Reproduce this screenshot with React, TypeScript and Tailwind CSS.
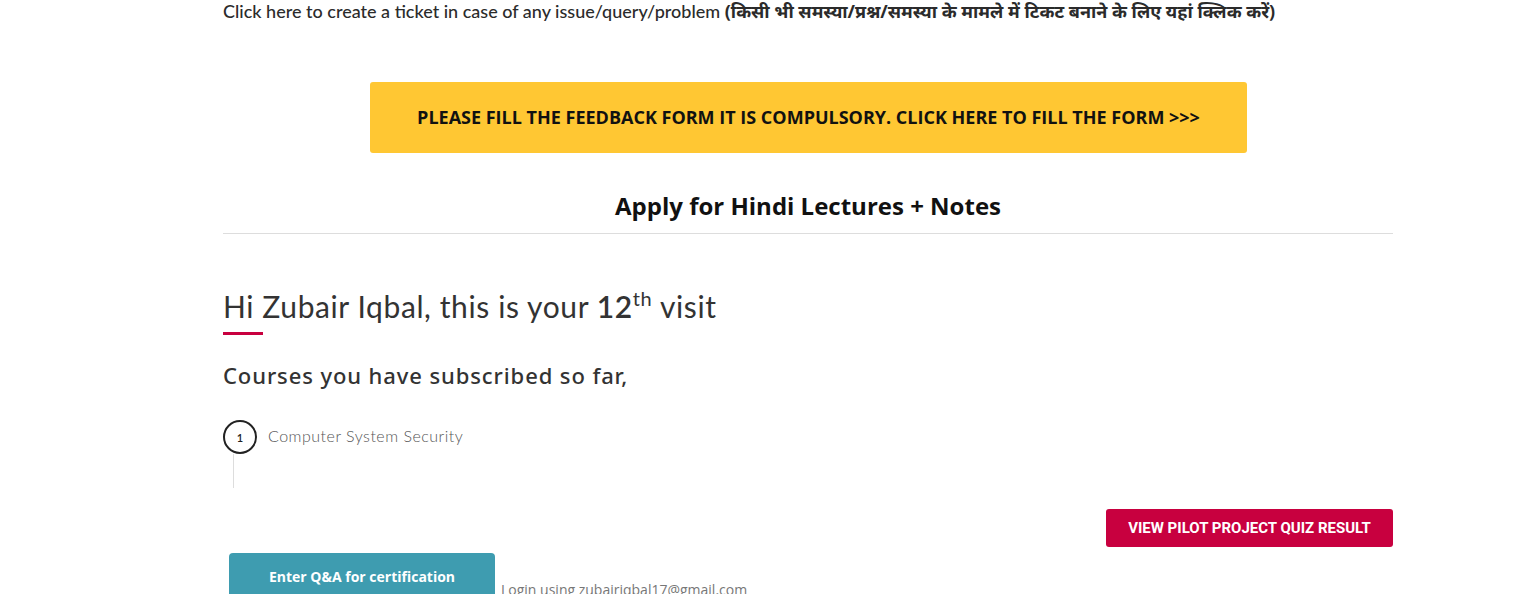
import React from 'react'

// ── Dashboard fragment ────────────────────────────────────────────────────────

const raleway = { fontFamily: 'Lato, "Noto Sans", sans-serif' }

export default function App() {
  return (
    <div className="w-[1524px] h-[594px] overflow-hidden bg-white">
      <div className="ml-[223px] w-[1170px]">
        <p
          className="text-[18px] leading-[22px] font-medium text-[#2b2b2b] pt-0"
          style={raleway}
        >
          Click here to create a ticket in case of any issue/query/problem{' '}
          <span className="font-bold" style={{ fontFamily: '"Noto Sans", "Noto Sans Devanagari", sans-serif' }}>
            (किसी भी समस्या/प्रश्न/समस्या के मामले में टिकट बनाने के लिए यहां क्लिक करें)
          </span>
        </p>

        <div className="mt-[60px] ml-[147px] w-[877px] h-[71px] rounded-[3px] bg-[#ffc733] flex items-center justify-center">
          <span className="text-[18px] font-bold text-[#111] font-['Open_Sans',sans-serif]">
            PLEASE FILL THE FEEDBACK FORM IT IS COMPULSORY. CLICK HERE TO FILL THE FORM &gt;&gt;&gt;
          </span>
        </div>

        <div className="mt-[38px] pb-[12px] border-b border-[#ddd] text-center">
          <h2 className="text-[24px] leading-[30px] font-bold text-[#111] font-['Open_Sans',sans-serif]">
            Apply for Hindi Lectures + Notes
          </h2>
        </div>

        <h1 className="mt-[54px] text-[30px] leading-[36px] text-[#333] tracking-[0.6px]" style={raleway}>
          Hi Zubair Iqbal, this is your <span className="font-semibold">12</span>
          <sup className="text-[20px] align-super relative -top-[1px]">th</sup> visit
        </h1>
        <div className="mt-[8px] w-[40px] h-[3px] bg-[#c8003f]" />

        <h3 className="mt-[26px] text-[22px] leading-[28px] font-medium text-[#333] tracking-[0.9px] font-['Noto_Sans',sans-serif]">
          Courses you have subscribed so far,
        </h3>

        <div className="mt-[31px] flex">
          <div className="flex flex-col items-start">
            <div className="w-[34px] h-[34px] rounded-full border-2 border-[#222] flex items-center justify-center text-[11px] font-semibold text-[#222] pt-[2px]" style={raleway}>
              1
            </div>
            <div className="ml-[10px] w-px h-[34px] bg-[#ddd]" />
          </div>
          <span className="ml-[11px] mt-[4px] text-[16px] font-light text-[#555] tracking-[0.5px]" style={raleway}>
            Computer System Security
          </span>
        </div>

        <div className="mt-[21px] flex justify-end">
          <button className="w-[287px] h-[38px] rounded-[3px] bg-[#c8003f] text-white text-[15px] font-bold font-['Roboto',sans-serif]">
            VIEW PILOT PROJECT QUIZ RESULT
          </button>
        </div>

        <div className="mt-[6px] flex items-start">
          <button className="ml-[6px] w-[266px] h-[50px] rounded-t-[4px] bg-[#3e9cb0] text-white text-[14px] font-bold font-['Open_Sans',sans-serif] pb-[4px]">
            Enter Q&amp;A for certification
          </button>
          <span className="ml-[6px] mt-[26px] text-[14px] text-[#777] font-['Open_Sans',sans-serif]">
            Login using zubairiqbal17@gmail.com
          </span>
        </div>
      </div>
    </div>
  )
}
